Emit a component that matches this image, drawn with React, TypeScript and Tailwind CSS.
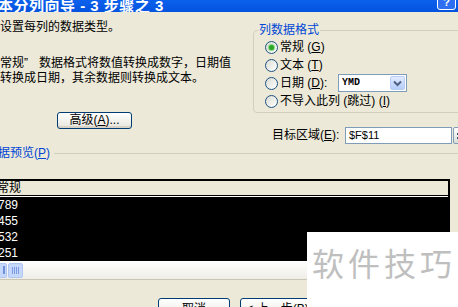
import React from "react";

const U = ({ c }: { c: string }) => (
  <span className="underline underline-offset-[1px]">{c}</span>
);

function Radio({ checked }: { checked?: boolean }) {
  return (
    <span className="flex h-[13px] w-[13px] shrink-0 items-center justify-center rounded-full border border-[#1c5180] bg-gradient-to-br from-[#dcdcd5] to-white">
      {checked && (
        <span className="h-[5px] w-[5px] rounded-full bg-[#2aa628] shadow-[0_0_1px_1px_#7fd97c]" />
      )}
    </span>
  );
}

function XpButton({
  children,
  className,
}: {
  children: React.ReactNode;
  className: string;
}) {
  return (
    <div
      className={
        "flex shrink-0 items-center justify-center whitespace-nowrap rounded-[3px] border border-[#003c74] bg-gradient-to-b from-white to-[#e6e5dc] shadow-[inset_0_-2px_0_#d8d2c6] " +
        className
      }
    >
      {children}
    </div>
  );
}

export default function App() {
  return (
    <div className="relative h-[307px] w-[458px] overflow-hidden bg-[#ece9d8] font-['Liberation_Sans','Noto_Sans_CJK_SC',sans-serif] text-[12px] leading-[15px] text-black">
      {/* title bar */}
      <div className="flex h-[12px] items-end justify-between overflow-hidden bg-gradient-to-b from-[#0c61ec] to-[#0453df]">
        <span className="-mb-[1px] -ml-[2px] whitespace-nowrap text-[15px] font-bold leading-[15px] tracking-[0.5px] text-white">
          本分列向导 - 3 步骤之 3
        </span>
        <div className="mb-[2px] mr-[2px] flex h-[19px] w-[19px] shrink-0 items-end justify-center rounded-[3px] border border-white bg-[#2d6ff0] pb-[1px] text-[11px] font-bold leading-[11px] text-white">
          ?
        </div>
      </div>

      {/* main area */}
      <div className="flex">
        <div className="w-[253px] shrink-0 pt-[8px]">
          <p className="whitespace-nowrap">设置每列的数据类型。</p>
          <p className="mt-[21px] whitespace-nowrap">
            常规<span className="inline-block w-[15px]">”</span>数据格式将数值转换成数字，日期值
          </p>
          <p className="whitespace-nowrap">转换成日期，其余数据则转换成文本。</p>
          <XpButton className="ml-[57px] mt-[26px] h-[17px] w-[75px]">
            高级(<U c="A" />)...
          </XpButton>
        </div>

        <div className="min-w-0 flex-1">
          <fieldset className="mt-[11px] w-[230px] rounded-[4px] border border-[#d0d0bf] p-0">
            <legend className="ml-[4px] px-[1px] leading-[14px] text-[#0046d5]">
              列数据格式
            </legend>
            <div className="pb-[2px] pl-[11px] pt-[1px]">
              <div className="flex h-[18px] items-center">
                <Radio checked />
                <span className="ml-[2px] whitespace-nowrap">
                  常规 (<U c="G" />)
                </span>
              </div>
              <div className="flex h-[18px] items-center">
                <Radio />
                <span className="ml-[2px] whitespace-nowrap">
                  文本 (<U c="T" />)
                </span>
              </div>
              <div className="flex h-[18px] items-center">
                <Radio />
                <span className="ml-[2px] w-[58px] whitespace-nowrap">
                  日期 (<U c="D" />):
                </span>
                <div className="flex h-[18px] w-[69px] shrink-0 items-center border border-[#7f9db9] bg-white">
                  <span className="flex-1 pl-[3px] font-['Liberation_Mono',monospace] text-[10px] font-bold leading-[12px]">
                    YMD
                  </span>
                  <div className="mr-[1px] flex h-[14px] w-[15px] items-center justify-center rounded-[2px] border border-[#b9cef7] bg-gradient-to-b from-[#e2ebfe] to-[#b6ccf8]">
                    <svg width="9" height="7" viewBox="0 0 9 7">
                      <path
                        d="M1 1.5 L4.5 5 L8 1.5"
                        fill="none"
                        stroke="#4d6185"
                        strokeWidth="2"
                      />
                    </svg>
                  </div>
                </div>
              </div>
              <div className="flex h-[18px] items-center">
                <Radio />
                <span className="ml-[2px] whitespace-nowrap">
                  不导入此列 (跳过) (<U c="I" />)
                </span>
              </div>
            </div>
          </fieldset>

          <div className="mt-[14px] flex h-[17px] items-center pl-[19px]">
            <span className="w-[73px] shrink-0 whitespace-nowrap">
              目标区域(<U c="E" />):
            </span>
            <div className="flex h-[17px] w-[107px] shrink-0 items-center border border-[#7f9db9] bg-white pl-[3px] text-[11px]">
              $F$11
            </div>
            <div className="ml-[1px] flex h-[17px] w-[16px] shrink-0 flex-col items-center justify-center gap-[2px] rounded-[2px] border border-[#7f9db9] bg-gradient-to-b from-white to-[#dcdcd5]">
              <span className="h-[2px] w-[8px] bg-[#3a4f7a]" />
              <span className="h-[2px] w-[8px] bg-[#3a4f7a]" />
            </div>
          </div>
        </div>
      </div>

      {/* preview label */}
      <div className="mt-[2px] flex items-center">
        <span className="-ml-[14px] whitespace-nowrap text-[#0046d5]">
          数据预览(<U c="P" />)
        </span>
        <div className="ml-[4px] h-px flex-1 bg-[#d0d0bf]" />
      </div>

      {/* preview box */}
      <div className="mt-[18px] w-[450px] border-r-2 border-t-2 border-black">
        <div className="h-[15px] border-b border-black leading-[14px]">
          <span className="-ml-[3px]">常规</span>
        </div>
        <div className="h-px bg-white" />
        <div className="bg-black text-white">
          {["789", "455", "532", "251"].map((v) => (
            <div key={v} className="h-[16px] leading-[16px]">
              <span className="-ml-[2px]">{v}</span>
            </div>
          ))}
        </div>
        <div className="flex h-[19px] items-center gap-[1px] border-b border-[#c9c6b6] bg-gradient-to-b from-white to-[#efede6]">
          <div className="flex h-[15px] w-[7px] items-center justify-end rounded-r-[2px] border border-l-0 border-[#b1c7f2] bg-[#c6d7fc] pr-[1px]">
            <span className="h-[8px] w-[2px] bg-[#6f8fd8]" />
          </div>
          <div className="flex h-[15px] w-[15px] items-center justify-center gap-[1px] rounded-[2px] border border-[#b1c7f2] bg-[#c6d7fc]">
            <span className="h-[7px] w-px bg-[#7d9be0]" />
            <span className="h-[7px] w-px bg-[#7d9be0]" />
            <span className="h-[7px] w-px bg-[#7d9be0]" />
            <span className="h-[7px] w-px bg-[#7d9be0]" />
          </div>
        </div>
      </div>

      {/* bottom buttons */}
      <div className="mt-[18px] flex gap-[10px] pl-[158px]">
        <XpButton className="h-[23px] w-[72px]">取消</XpButton>
        <XpButton className="h-[23px] w-[75px]">
          &lt; 上一步(<U c="B" />)
        </XpButton>
      </div>

      {/* watermark */}
      <div className="absolute bottom-0 right-0 h-[75px] w-[151px] whitespace-nowrap bg-white pl-[5px] pt-[17px] text-[32px] leading-[32px] tracking-[4px] text-[#bfbfbf]">
        软件技巧
      </div>
    </div>
  );
}
